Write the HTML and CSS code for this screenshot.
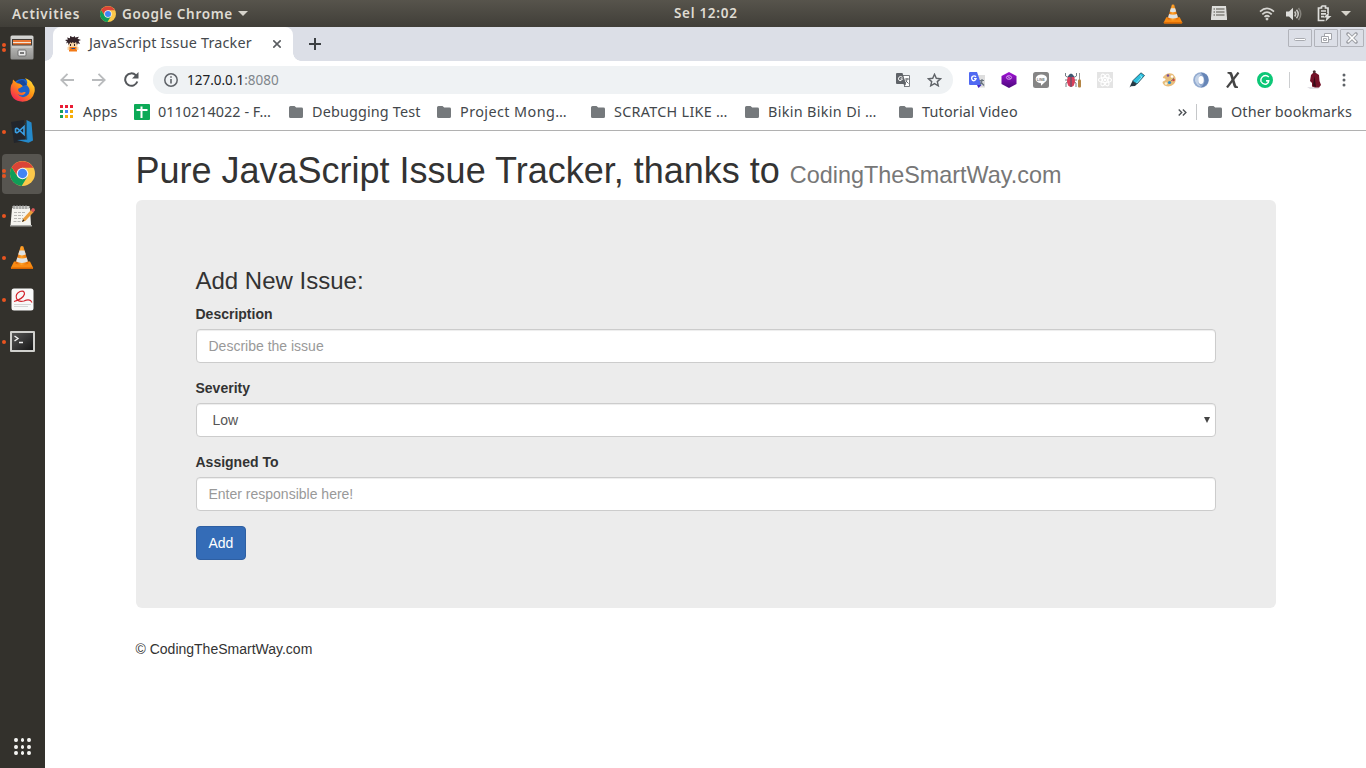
FILE: index.html
```html
<!DOCTYPE html>
<html lang="en">
<head>
<meta charset="utf-8">
<title>JavaScript Issue Tracker</title>
<link rel="stylesheet" href="styles.css">
</head>
<body>
<svg class="defs" aria-hidden="true">
  <defs>
    <linearGradient id="steel" x1="0" y1="0" x2="0" y2="1"><stop offset="0" stop-color="#d8d8d6"/><stop offset="1" stop-color="#8f8f8d"/></linearGradient>
    <linearGradient id="fire" x1="0.9" y1="0" x2="0.1" y2="1"><stop offset="0" stop-color="#ffe53a"/><stop offset=".45" stop-color="#ff9313"/><stop offset="1" stop-color="#f31260"/></linearGradient>
    <linearGradient id="purple" x1="0" y1="0" x2="0" y2="1"><stop offset="0" stop-color="#a113d6"/><stop offset="1" stop-color="#4c087d"/></linearGradient>
    <linearGradient id="screen" x1="0" y1="0" x2="1" y2="1"><stop offset="0" stop-color="#555"/><stop offset="1" stop-color="#171717"/></linearGradient>
    <linearGradient id="cone" x1="0" y1="0" x2="1" y2="0"><stop offset="0" stop-color="#d95b00"/><stop offset=".45" stop-color="#ffa32b"/><stop offset="1" stop-color="#e36a00"/></linearGradient>
    <symbol id="chrome" viewBox="0 0 24 24">
      <circle cx="12" cy="12" r="12" fill="#fbc84a"/>
      <path d="M1.6 6A12 12 0 0 0 11.2 24L16.8 14.8L12 17.4L7.2 14.8z" fill="#0f9d58"/>
      <path d="M1.600 6A12 12 0 0 1 22.400 6.500H12L7.300 9.300L6.600 13.500z" fill="#db4437"/>
      <circle cx="12" cy="12" r="5.600" fill="#f4f4f4"/><circle cx="12" cy="12" r="4.500" fill="#4285f4"/>
    </symbol>
    <symbol id="vlc" viewBox="0 0 24 24">
      <path d="M4 16L1 22q-.5 1.500 1 1.500h20q1.500 0 1-1.500L20 16z" fill="#f98b13"/><path d="M1 22h22l-.5 1.500h-21z" fill="#d96600"/>
      <path d="M10.600 1q1.400-.8 2.800 0L18.500 18q-6.500 3.600-13 0z" fill="url(#cone)"/>
      <path d="M9.500 5h5l1.300 4.100q-3.800 1.600-7.600 0zM7.300 12q4.700 2 9.400 0l1.200 4.100q-5.900 2.600-11.800 0z" fill="#dfe3e3"/>
    </symbol>
    <symbol id="folder" viewBox="0 0 14 12"><path d="M1.500 0h4l1.700 1.600h5.300Q14 1.600 14 3v7.500q0 1.500-1.500 1.500h-11Q0 12 0 10.500v-9Q0 0 1.500 0z" fill="#75797c"/></symbol>
  </defs>
</svg>

<header class="topbar">
  <span class="activities">Activities</span>
  <svg class="top-chrome"><use href="#chrome"/></svg>
  <span class="app-name">Google Chrome</span>
  <i class="caret"></i>
  <span class="clock">Sel 12:02</span>
  <div class="tray">
    <svg class="t-vlc" viewBox="0 0 24 24"><use href="#vlc"/></svg>
    <svg class="t-list" width="16" height="15" viewBox="0 0 16 15"><path d="M1 0h14l1 12v2H0v-2z" fill="#dededb"/><path d="M2.500 3h1.500M5 3h8.500M2.500 6h1.500M5 6h8.500M2.500 9h1.500M5 9h8.500" stroke="#55524b" stroke-width="1.200"/></svg>
    <svg class="t-wifi" width="16" height="14" viewBox="0 0 16 14" fill="none" stroke="#d6d5d1" stroke-width="1.700"><path d="M1 4.600Q8-1.800 15 4.600M3.300 7.400Q8 3 12.700 7.400M5.500 9.900Q8 7.600 10.500 9.900"/><circle cx="8" cy="12" r="1" fill="#d6d5d1" stroke-width="1"/></svg>
    <svg class="t-vol" width="16" height="14" viewBox="0 0 16 14"><path d="M0 4.500h3L7 .8v12.400L3 9.500H0z" fill="#dededb"/><path d="M8.700 4.500q2 2.500 0 5M10.500 2.700q3.500 4.300 0 8.600" fill="none" stroke="#c9c8c3" stroke-width="1.500"/><path d="M12.500 1q4.500 6 0 12" fill="none" stroke="#85837c" stroke-width="1.500"/></svg>
    <svg class="t-bat" width="15" height="17" viewBox="0 0 15 17"><path d="M4.500 1h4v2H11v5M7.500 15.500H1.500V3h3V1M4 6h5M4 8.800h5M4 11.600h3" fill="none" stroke="#dededb" stroke-width="1.700"/><path d="M12 7L6.500 12.500h3L8.500 16.500l6-5.500h-3z" fill="#dededb"/></svg>
    <i class="caret"></i>
  </div>
</header>

<div class="desktop">
  <nav class="dock">
    <div class="app two"><svg width="24" height="25" viewBox="0 0 24 25"><rect x=".5" y=".5" width="23" height="24" rx="1.500" fill="url(#steel)"/><rect x="2" y="4" width="20" height="8" fill="#443c37"/><path d="M3 5h18v2H3z" fill="#e97532"/><path d="M3 7h18v1H3z" fill="#f1e5d8"/><path d="M3 8h18v1.500H3z" fill="#e97532"/><path d="M2 10.500h20V13H2z" fill="#c9c9c7"/><rect x="8" y="15" width="8" height="6" rx="1" fill="#e9e9e9" stroke="#666" stroke-width=".9"/><rect x="10" y="17" width="4" height="2" fill="#777"/></svg></div>
    <div class="app none"><svg width="25" height="25" viewBox="0 0 25 25"><circle cx="12.500" cy="13" r="11" fill="#1d62c9"/><path d="M15 1q7 3 7.500 6 3 3 2 8-2 9.500-12 9.700Q1 24 .5 13 .5 8 2.500 6L3 2.500l3.500 3.200q3-.5 5 1.800L13 9l-3 2q-2 0-2 2 1 4 6 2 2-.5 1.500 1-3 4-8 1 4 5 9 2 4.500-3 2.500-8-1-2-3-3 3-3-1-7z" fill="url(#fire)"/><path d="M6.500 6q3.500-4 7.500-2.500l3.500 5q-2-1-4.500.5-3-3-6.500-3z" fill="#17479b"/></svg></div>
    <div class="app one"><svg width="24" height="25" viewBox="0 0 24 25"><path d="M1 3L14 1l1 21L4 24z" fill="#22252b"/><path d="M16.500 1l5 2.500 1.500 18-4.500 2.300L7 21l10-.5z" fill="#2489ca"/><path d="M7 9l7 6.500v-8L7 14M7 9l-1.500 1v3L7 14" fill="none" stroke="#3aa0e6" stroke-width="1.600"/><path d="M16 4l.8 16.500" stroke="#0f5684"/></svg></div>
    <div class="app two active"><svg width="25" height="25"><use href="#chrome"/></svg></div>
    <div class="app one"><svg width="25" height="22" viewBox="0 0 25 22"><path d="M2 3h18l1 17.500H.5z" fill="#f5f4ef"/><path d="M0 20h22v1.500H0z" fill="#a8a8a5"/><path d="M2.500 1h17v3h-17z" fill="#cfcfcb"/><path d="M4 0v4M7 0v4M10 0v4M13 0v4M16 0v4" stroke="#888"/><path d="M4 7.500h12M4 10.500h9M4 13.500h9M3.500 16.500h7" stroke="#b7b6b2" stroke-dasharray="3 1"/><path d="M12 17l1.200-3.500L21 5l2.500 2.200-8 8.600z" fill="#ea9c3a"/><path d="M20.700 5.200l2-2.200q2.500 0 2.200 2.500l-1.600 1.900z" fill="#d95858"/><path d="M12 17l1-2.700 1.600 1.400z" fill="#222"/></svg></div>
    <div class="app one"><svg width="24" height="25"><use href="#vlc"/></svg></div>
    <div class="app one"><svg width="23" height="23" viewBox="0 0 23 23"><rect x=".5" y=".5" width="22" height="22" rx="2.500" fill="#f8f8f8"/><path d="M3 13.500Q12 11 13.500 6q0-4-4.500-2.500-5 2.500-3.500 7 2 4 7.500 2.500 4-2 6.500-.5l1.500 2" fill="none" stroke="#d3262e" stroke-width="1.200"/><path d="M3 16.500h17M3 18.500h14" stroke="#d5d5d5"/></svg></div>
    <div class="app one"><svg width="25" height="21" viewBox="0 0 25 21"><rect width="25" height="21" rx="1" fill="#d0d0cd"/><rect x="2" y="2" width="21" height="17" fill="url(#screen)"/><path d="M4.500 5l3.500 2.500L4.500 10M9 11.500h4" fill="none" stroke="#f1f1f1" stroke-width="1.400"/></svg></div>
    <div class="show-apps"><i></i><i></i><i></i><i></i><i></i><i></i><i></i><i></i><i></i></div>
  </nav>

  <main class="browser">
    <div class="tabstrip">
      <div class="tab">
        <svg class="favicon" width="16" height="16" viewBox="0 0 16 16"><path d="M4 10h8v5.500H4z" fill="#f37a16"/><path d="M2.500 11h2v3h-2zM11.500 11h2v3h-2zM3.500 6h9v5h-9z" fill="#f7d5a8"/><path d="M6.500 12h3.500v1H6.500z" fill="#20509a"/><path d="M5 8h1v2H5zM9 8h1v2H9z" fill="#332322"/><path d="M0 4l3-.5-1-2 3 .8L5 0l3 1.200L10 0v1.500l4-.8-1.500 2L16 4l-2.500 1L15 8l-2.300-.7L12 9l-1-3-2 1.500-1-1.500-2 1.500-.5-1.500L3.500 9 3 6.500 1 7.500l1-2z" fill="#34242a"/></svg>
        <span class="tab-title">JavaScript Issue Tracker</span>
        <svg class="tab-close" width="8" height="8" viewBox="0 0 8 8"><path d="M.3.3l7.400 7.400M7.700.3L.3 7.700" stroke="#5a5d61" stroke-width="1.600"/></svg>
      </div>
      <svg class="newtab" width="12" height="12" viewBox="0 0 12 12"><path d="M6 0v12M0 6h12" stroke="#3c4043" stroke-width="2"/></svg>
      <div class="winbtns">
        <span><svg width="14" height="12" viewBox="0 0 14 12"><rect x="1.500" y="6.500" width="11" height="2" rx="1" fill="#fff" stroke="#a9abb1"/></svg></span>
        <span><svg width="14" height="12" viewBox="0 0 14 12" fill="#fff" stroke="#a2a4aa"><path d="M5.500 1.500h7v6h-7z"/><path d="M2.500 4.500h7v6h-7z"/><path d="M4.500 6.500h3v2h-3z"/></svg></span>
        <span><svg width="14" height="12" viewBox="0 0 14 12"><path d="M3 2l8 8M11 2l-8 8" stroke="#a0a2a8" stroke-width="3.600" stroke-linecap="round"/><path d="M3 2l8 8M11 2l-8 8" stroke="#fff" stroke-width="1.700"/></svg></span>
      </div>
    </div>

    <div class="toolbar">
      <svg class="back" width="14" height="14" viewBox="0 0 14 14"><path d="M14 7H1.500M7.500 .8L1.300 7l6.200 6.200" fill="none" stroke="#b9bbbd" stroke-width="1.800"/></svg>
      <svg class="forward" width="14" height="14" viewBox="0 0 14 14"><path d="M0 7h12.500M6.500 .8L12.700 7l-6.200 6.200" fill="none" stroke="#b9bbbd" stroke-width="1.800"/></svg>
      <svg class="reload" width="15" height="15" viewBox="0 0 15 15"><path d="M13.300 9.500A6.200 6.200 0 1 1 11.800 3.200L13 4.500" fill="none" stroke="#54575b" stroke-width="2"/><path d="M14.500 0v6.500H8z" fill="#54575b"/></svg>
      <div class="omnibox">
        <svg width="14" height="14" viewBox="0 0 14 14"><circle cx="7" cy="7" r="6.200" fill="none" stroke="#5f6368" stroke-width="1.500"/><path d="M7 6v4.500M7 3.200v1.600" stroke="#5f6368" stroke-width="1.600"/></svg>
        <span class="url">127.0.0.1<span>:8080</span></span>
        <svg class="omni-tr" width="14" height="14" viewBox="0 0 14 14"><path d="M6 2.500h7.500v11H8" fill="#fff" stroke="#777b7f"/><path d="M1 0h5.500L10 11H1Q0 11 0 10V1Q0 0 1 0z" fill="#5f6368"/><path d="M6.500 4.300Q4.500 2.800 3 4.200q-1.300 1.700.2 3.200 2 1.200 3.300-1.500H4.500" fill="none" stroke="#fff"/><path d="M9 6h4M11 5v1q0 2.500-1.800 4M9.500 7.500l3 3" fill="none" stroke="#5f6368" stroke-width=".9"/><path d="M7.500 11l1 2.500L10 11z" fill="#5f6368"/></svg>
        <svg class="omni-star" width="15" height="14" viewBox="0 0 15 14"><path d="M7.500 1.300l1.800 4 4.300.4-3.300 2.900 1 4.200-3.800-2.200-3.800 2.200 1-4.200L1.400 5.700l4.300-.4z" fill="none" stroke="#5f6368" stroke-width="1.400"/></svg>
      </div>
      <div class="extensions">
        <svg viewBox="0 0 16 16"><path d="M7 3h9v12.500H9z" fill="#dedede"/><path d="M1 0h7l4.500 13H1q-1 0-1-1V1q0-1 1-1z" fill="#5069f2"/><path d="M8 13h4.500L9.500 16z" fill="#4428c9"/><path d="M7 4.800Q5.300 3.200 3.300 4.500 1.800 6.500 3.600 8.500 6 9.500 7 6.700H5" fill="none" stroke="#fff" stroke-width="1.300"/><path d="M10.500 8.500H15M13 7v1.500q0 2-2 4M11.500 9.500l3.500 4" fill="none" stroke="#697480" stroke-width="1.200"/></svg>
        <svg viewBox="0 0 16 16"><path d="M8 0l7.500 4v8L8 16 .5 12V4z" fill="url(#purple)"/><ellipse cx="8" cy="5.500" rx="2.600" ry="1.800" fill="none" stroke="#e9bdf7" stroke-width=".8"/><path d="M6.500 4.500l3 2" stroke="#e9bdf7" stroke-width=".8"/></svg>
        <svg viewBox="0 0 16 16"><rect width="16" height="16" rx="2.500" fill="#858585"/><path d="M8 2.500c7 0 7.500 6 3.500 8L8 13.700v-2.500C1 11 .8 3 8 2.500z" fill="#fff"/><text x="3.800" y="8.500" class="line-word">LINE</text></svg>
        <svg viewBox="0 0 16 16"><path d="M.5 1v3L4 6M0 8h4M1 15v-4l3-2M11.500 1v3L8 6M12 8H8M11 15v-4L8 9" fill="none" stroke="#777f85"/><ellipse cx="6" cy="9" rx="4" ry="6" fill="#d9405c"/><path d="M2.500 5Q6-2 9.500 5z" fill="#405872"/><path d="M6 4v11" stroke="#405872"/><path d="M14.500 1v7" stroke="#999"/><rect x="13" y="7.500" width="3" height="8" rx="1" fill="#b48545"/></svg>
        <svg viewBox="0 0 16 16"><rect width="16" height="16" fill="#e4e4e4"/><g fill="none" stroke="#fff" stroke-width="1.100"><ellipse cx="8" cy="8" rx="6.500" ry="2.500"/><ellipse cx="8" cy="8" rx="6.500" ry="2.500" transform="rotate(60 8 8)"/><ellipse cx="8" cy="8" rx="6.500" ry="2.500" transform="rotate(120 8 8)"/></g><circle cx="8" cy="8" r="1.300" fill="#fff"/></svg>
        <svg viewBox="0 0 16 16"><path d="M12 .8L15.500 3.500 8 12 3.500 9z" fill="#2dc0df" stroke="#16313d" stroke-width=".7"/><path d="M11 3.500L13 5 7.500 11" fill="none" stroke="#8be9f6"/><path d="M3.500 9L8 12l-2 2-4 .3L.5 15.500 2 12z" fill="#263944"/></svg>
        <svg viewBox="0 0 16 16"><path d="M2 5Q6-.5 12 2q5 5 1 10-4 4-9.500 1.500Q-.2 10 3 9q2.500-1 1-2.500Q1.500 6.500 2 5z" fill="#e8bd7b"/><circle cx="7" cy="3.500" r="1.300" fill="#744e9e"/><circle cx="11" cy="4.500" r="1.300" fill="#fff"/><circle cx="12.500" cy="8" r="1.300" fill="#d54545"/><circle cx="8.500" cy="10.500" r="1.600" fill="#2b91d0"/><circle cx="5" cy="11.500" r="1.300" fill="#f6f3d7"/><path d="M9.500 9.500L13 6" stroke="#8e836f"/></svg>
        <svg viewBox="0 0 16 16"><circle cx="8" cy="8" r="7.800" fill="#93abd0"/><path d="M8 1.500Q1 3 2 9q2 5 6 5.500-6-5 0-13z" fill="#c3d2e7"/><path d="M8 .5q8 1 7.500 8-1 6-7.500 7 7-6 0-15z" fill="#6685b6"/><ellipse cx="8" cy="8" rx="2.700" ry="4" fill="#fff"/></svg>
        <svg viewBox="0 0 16 16"><path d="M2.500 0H6q1 0 1.500 2L11 13q.5 1.500 2 1.500V16h-2.500Q9 16 8.500 14L5 3Q4.500 1.500 2.500 1.500z" fill="#454545"/><path d="M13.500.5L2 15.500" stroke="#454545" stroke-width="2.200"/></svg>
        <svg viewBox="0 0 16 16"><circle cx="8" cy="8" r="8" fill="#0cc777"/><path d="M11.800 5Q9.500 2.800 6.500 4 3.300 6 4 9.500 6 13 9.500 12q2.300-1 2.300-3.300H9M12 9h-2.500" fill="none" stroke="#fff" stroke-width="1.400"/></svg>
      </div>
      <i class="tool-sep"></i>
      <svg class="avatar" width="16" height="20" viewBox="0 0 16 20"><path d="M1 17h13l-2 2H4z" fill="#e3e1e6"/><path d="M7 3h3l3 2 .5 6 1.500 4-2 2.500H9L6 16.500V13l-2-2 1-6z" fill="#741128"/><path d="M8.500 6L10 17l-3-1.500z" fill="#340d18"/><circle cx="8.300" cy="1.800" r="1.500" fill="#483032"/></svg>
      <svg class="menu" width="4" height="14" viewBox="0 0 4 14" fill="#5f6368"><circle cx="2" cy="2" r="1.500"/><circle cx="2" cy="7" r="1.500"/><circle cx="2" cy="12" r="1.500"/></svg>
    </div>

    <div class="bookmarks">
      <div class="bm apps"><svg width="14" height="14" viewBox="0 0 14 14"><path d="M0 0h3v3H0zM5 0h3v3H5zM10 0h3v3h-3z" fill="#ea1d35"/><path d="M0 5h3v3H0zM0 10h3v3H0z" fill="#16a05a"/><path d="M5 5h3v3H5z" fill="#4285f4"/><path d="M10 5h3v3h-3zM5 10h3v3H5zM10 10h3v3h-3z" fill="#f6ae08"/></svg><span>Apps</span></div>
      <div class="bm sheet"><svg width="16" height="16" viewBox="0 0 16 16"><rect width="16" height="16" rx="1" fill="#0caa57"/><path d="M7.500 2.500V14M2.500 6h11" stroke="#fff" stroke-width="2"/></svg><span>0110214022 - F…</span></div>
      <div class="bm debug"><svg width="14" height="12"><use href="#folder"/></svg><span>Debugging Test</span></div>
      <div class="bm project"><svg width="14" height="12"><use href="#folder"/></svg><span>Project Mong…</span></div>
      <div class="bm scratch"><svg width="14" height="12"><use href="#folder"/></svg><span>SCRATCH LIKE …</span></div>
      <div class="bm bikin"><svg width="14" height="12"><use href="#folder"/></svg><span>Bikin Bikin Di …</span></div>
      <div class="bm tutorial"><svg width="14" height="12"><use href="#folder"/></svg><span>Tutorial Video</span></div>
      <svg class="more" width="9" height="7" viewBox="0 0 9 7"><path d="M.7.5l3 3-3 3M4.900.5l3 3-3 3" fill="none" stroke="#4d5156" stroke-width="1.400"/></svg>
      <i class="bm-sep"></i>
      <div class="bm other"><svg width="14" height="12"><use href="#folder"/></svg><span>Other bookmarks</span></div>
    </div>

    <div class="page">
      <div class="container">
        <h1>Pure JavaScript Issue Tracker, thanks to <small>CodingTheSmartWay.com</small></h1>
        <div class="jumbotron">
          <h3>Add New Issue:</h3>
          <form>
            <div class="form-group"><label for="desc">Description</label><input id="desc" class="form-control" type="text" placeholder="Describe the issue"></div>
            <div class="form-group"><label for="sev">Severity</label><div class="form-control select" id="sev"><span>Low</span><svg width="6" height="6" viewBox="0 0 6 6"><path d="M0 0h6L3 6z" fill="#444"/></svg></div></div>
            <div class="form-group"><label for="who">Assigned To</label><input id="who" class="form-control" type="text" placeholder="Enter responsible here!"></div>
            <button type="button" class="btn">Add</button>
          </form>
        </div>
        <footer>© CodingTheSmartWay.com</footer>
      </div>
    </div>
  </main>
</div>
</body>
</html>
```
FILE: styles.css
```css
* { box-sizing: border-box; }
body { margin: 0; width: 1366px; height: 768px; overflow: hidden; background: #fff; font-family: "Noto Sans", sans-serif; }
svg { display: block; flex: none; }
.defs { position: absolute; width: 0; height: 0; }

.topbar { position: relative; height: 27px; display: flex; align-items: center; padding: 0 15px 0 12px; background: linear-gradient(#57544c, #403e38); color: #dfdbd2; font-size: 13.5px; font-weight: 600; line-height: 26px; white-space: nowrap; }
.activities { width: 88px; letter-spacing: .8px; }
.top-chrome { width: 16px; height: 16px; }
.app-name { width: 112px; margin-left: 6px; margin-right: 4px; letter-spacing: .67px; }
.caret { flex: none; width: 0; height: 0; border: 5px solid transparent; border-top-color: #d6d3cb; border-bottom: 0; }
.clock { position: absolute; left: 674px; top: 0; letter-spacing: .7px; }
.tray { margin-left: auto; display: flex; align-items: center; }
.t-vlc { width: 20px; height: 22px; }
.t-list { margin-left: 28px; }
.t-wifi { margin-left: 32px; }
.t-vol { margin-left: 11px; }
.t-bat { margin-left: 15px; margin-right: 9px; }

.desktop { display: flex; height: 741px; }
.dock { width: 45px; background: #33312c; display: flex; flex-direction: column; position: relative; }
.app { height: 42px; width: 45px; padding: 0 1px 1px 0; display: grid; place-items: center; position: relative; }
.app svg { position: relative; }
.app::before { content: ""; position: absolute; left: 2px; top: 19px; width: 4px; height: 4px; border-radius: 50%; background: #e95420; }
.app.none::before { display: none; }
.app.two::before { top: 16px; box-shadow: 0 5px #e95420; }
.app.active::after { content: ""; position: absolute; left: 2px; top: 1px; width: 40px; height: 40px; border-radius: 4px; background: #575550; }
.app.active::before, .app.active svg { z-index: 1; }
.show-apps { margin: auto 0 13px 14px; display: grid; grid-template-columns: repeat(3, 4px); gap: 2.500px; }
.show-apps i { width: 3.500px; height: 4px; border-radius: 50%; background: #f4f4f2; }

.browser { flex: 1; min-width: 0; background: #fff; }
.tabstrip { height: 34px; background: #dcdfe7; display: flex; align-items: flex-start; padding-left: 8px; }
.tab { position: relative; width: 240px; height: 34px; background: #fff; border-radius: 8px 8px 0 0; display: flex; align-items: center; padding-left: 12px; }
.tab::before, .tab::after { content: ""; position: absolute; bottom: 0; width: 8px; height: 8px; }
.tab::before { left: -8px; background: radial-gradient(circle at 0 0, transparent 7.500px, #fff 8px); }
.tab::after { right: -8px; background: radial-gradient(circle at 100% 0, transparent 7.500px, #fff 8px); }
.tab-title { width: 165px; margin-left: 8px; padding-bottom: 2px; font-size: 14.400px; letter-spacing: .17px; line-height: 20px; color: #45494d; white-space: nowrap; }
.tab-close { margin-left: 19px; }
.newtab { margin: 11px 0 0 16px; }
.winbtns { margin: 2px 2px 0 auto; display: flex; gap: 2px; }
.winbtns span { width: 24px; height: 18px; border: 1px solid #b1b3ba; border-radius: 1px; display: grid; place-items: center; }

.toolbar { height: 38px; display: flex; align-items: center; padding-left: 15px; }
.forward { margin-left: 18px; }
.reload { margin-left: 18px; margin-top: -1px; }
.omnibox { width: 800px; height: 28px; margin-left: 14px; border-radius: 14px; background: #eff2f4; display: flex; align-items: center; padding: 0 11px 0 11px; }
.url { margin-left: 9px; font-size: 13.500px; color: #202124; white-space: nowrap; }
.url span { color: #80868b; }
.omni-tr { margin-left: auto; }
.omni-star { margin-left: 17px; }
.extensions { margin-left: 16px; display: flex; gap: 16px; }
.extensions svg { width: 16px; height: 16px; }
.line-word { font: bold 3.500px "Liberation Sans", sans-serif; fill: #777; }
.tool-sep { width: 1px; height: 16px; margin-left: 16px; background: #ccced0; }
.avatar { margin-left: 16px; }
.menu { margin-left: 20px; }

.bookmarks { height: 32px; border-bottom: 1px solid #b1b1b1; display: flex; align-items: center; padding: 0 14px 5px 15px; font-size: 14.400px; color: #43474b; }
.bm { display: flex; align-items: center; white-space: nowrap; }
.bm span { margin-left: 9px; line-height: 20px; }
.apps { width: 74px; letter-spacing: .2px; }
.sheet { width: 155px; letter-spacing: .03px; }
.sheet span { margin-left: 8px; }
.debug { width: 148px; letter-spacing: .15px; }
.project, .scratch, .bikin { width: 154px; }
.project { letter-spacing: .42px; }
.scratch { letter-spacing: .28px; }
.bikin { letter-spacing: .33px; }
.tutorial { letter-spacing: .18px; }
.more { margin-left: auto; }
.bm-sep { width: 1px; height: 16px; margin: 0 11px 0 9px; background: #c5c7c9; }
.other { width: 144px; letter-spacing: .12px; }

.page { font-family: "Liberation Sans", Arial, sans-serif; font-size: 14px; line-height: 20px; color: #333; }
.container { width: 1170px; margin: 0 auto; padding: 0 15px; display: flow-root; }
h1, h3 { font-weight: 500; line-height: 1.1; margin: 20px 0 10px; }
h1 { font-size: 36px; margin-bottom: 9px; }
h1 small { font-size: 65%; font-weight: 400; line-height: 1; color: #777; }
h3 { font-size: 24px; }
.jumbotron { display: flow-root; padding: 48px 60px; margin-bottom: 31px; background: #ececec; border-radius: 6px; }
.form-group { margin-bottom: 15px; }
label { display: block; font-weight: 700; margin-bottom: 5px; height: 20px; }
.form-control { display: block; width: 100%; height: 34px; padding: 6px 12px; font: 14px/20px "Liberation Sans", Arial, sans-serif; color: #555; background: #fff; border: 1px solid #ccc; border-radius: 4px; box-shadow: inset 0 1px 1px rgba(0,0,0,.075); }
.form-control::placeholder { color: #999; opacity: 1; }
.select { display: flex; align-items: center; justify-content: space-between; padding: 6px 5px 6px 16px; }
.btn { display: block; height: 34px; padding: 6px 12px; font: 14px/20px "Liberation Sans", Arial, sans-serif; color: #fff; background: #346cb7; border: 1px solid #2e5fa2; border-radius: 4px; }
```
